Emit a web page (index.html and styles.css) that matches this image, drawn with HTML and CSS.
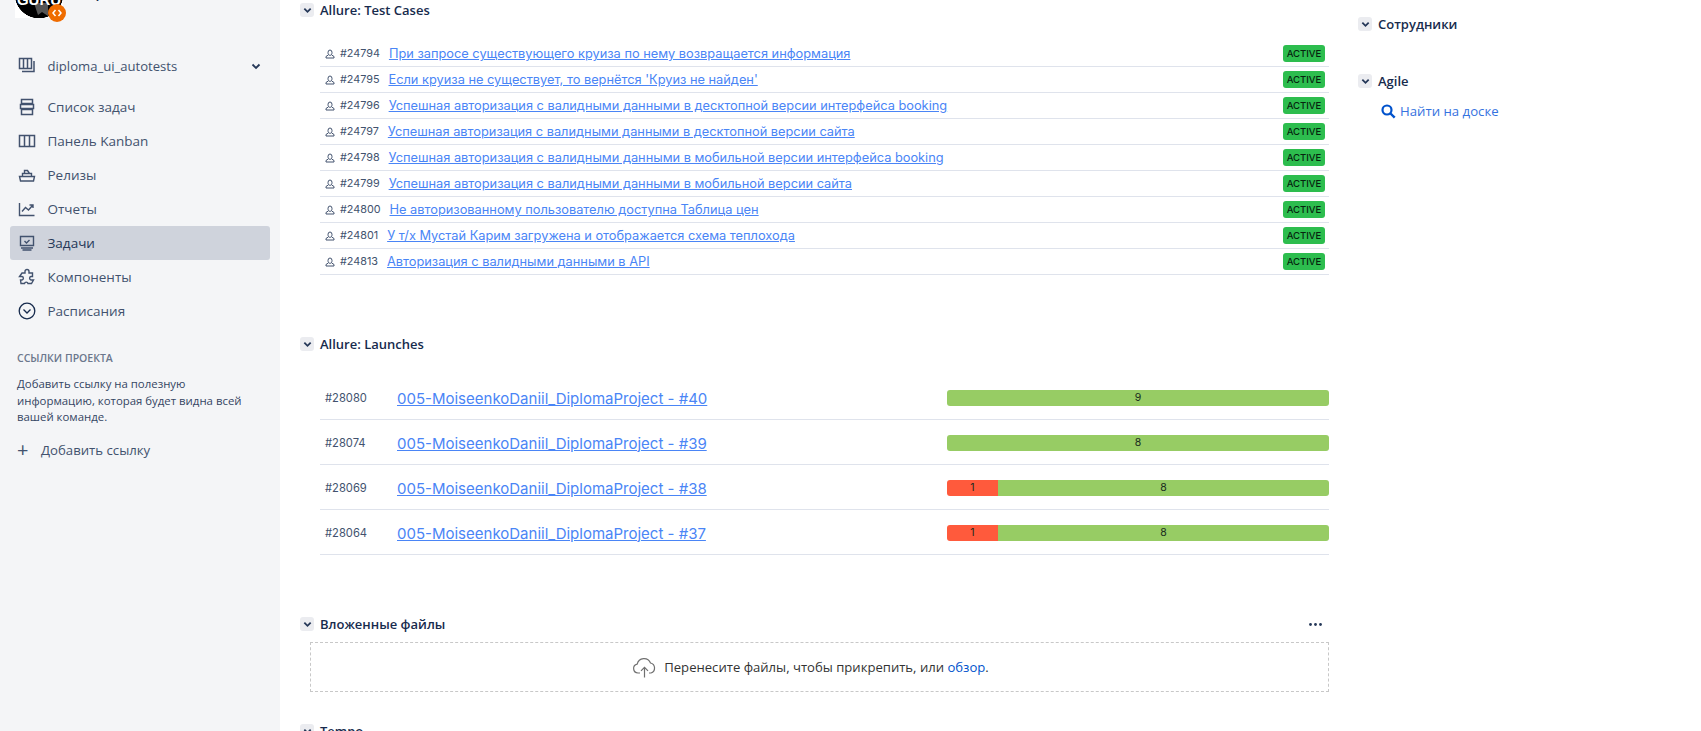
FILE: index.html
```html
<!DOCTYPE html>
<html lang="en">
<head>
    <meta charset="UTF-8">
    <title>diploma_ui_autotests</title>
    <link rel="stylesheet" href="styles.css">
</head>
<body>
    <aside class="sidebar">
        <div class="project-head">
            <div class="logo"><span class="logo-text">GURU</span>
                <svg class="logo-mark" width="14" height="13" viewBox="0 0 14 13"><path d="M0 0h14v13l-6-4-4 3z" fill="#555"/></svg>
                <span class="logo-badge"><svg width="10" height="8" viewBox="0 0 10 8"><path d="M3.500 1 1 4l2.500 3M6.500 1 9 4 6.500 7" fill="none" stroke="#fff" stroke-width="1.500"/></svg></span>
            </div>
            <div class="project-name">diploma_ui_autotests</div>
        </div>

        <div class="nav-item nav-board">
            <svg class="nav-icon" viewBox="0 0 18 18"><path d="M1.500 1.500h12v10h-12zM5.500 1.500v10M9.500 1.500v10M16 4v10.500H4" fill="none" stroke="#42526e" stroke-width="1.500"/></svg>
            <span class="nav-label">diploma_ui_autotests</span>
            <svg class="nav-chevron" viewBox="0 0 10 7"><path d="M1.500 1.500 5 5l3.500-3.500" fill="none" stroke="#253858" stroke-width="1.800"/></svg>
        </div>
        <nav class="nav">
            <a class="nav-item"><svg class="nav-icon" viewBox="0 0 18 18"><path d="M3.500 1.500h11v4h-11zM2.500 6.500h13v4h-13zM3.500 11.500h11v5h-11z" fill="none" stroke="#42526e" stroke-width="1.500"/></svg>Список задач</a>
            <a class="nav-item"><svg class="nav-icon" viewBox="0 0 18 18"><path d="M1.500 3.500h15v11h-15zM6.500 3.500v11M11.500 3.500v11" fill="none" stroke="#42526e" stroke-width="1.500"/></svg>Панель Kanban</a>
            <a class="nav-item"><svg class="nav-icon" viewBox="0 0 18 18"><path d="M1.500 10.500h15l-1 4.500h-13zM4.500 10.500V7.500h9v3M6.500 7.500V4.500h3l2 3" fill="none" stroke="#42526e" stroke-width="1.400"/></svg>Релизы</a>
            <a class="nav-item"><svg class="nav-icon" viewBox="0 0 18 18"><path d="M1.500 3v12.500h15M4 11.500l3.500-4 3 2.500 4-4.500M11.500 5h3.500v3" fill="none" stroke="#42526e" stroke-width="1.400"/></svg>Отчеты</a>
            <a class="nav-item active"><svg class="nav-icon" viewBox="0 0 18 18"><path d="M2.500 2.500h13v9h-13zM3 14h12M4.500 16h9M6.500 7l2 2 3-3" fill="none" stroke="#42526e" stroke-width="1.400"/></svg>Задачи</a>
            <a class="nav-item"><svg class="nav-icon" viewBox="0 0 18 18"><path d="M7 3.500a2 2 0 0 1 4 0V5h3.500v3.500H13a1.800 1.800 0 0 0 0 3.500h2.500l-2 3.500H10a1.800 1.800 0 0 0-3.500 0H3l-.5-3.500H4a1.800 1.800 0 0 0 0-3.500H1.500L4 5h3z" fill="none" stroke="#42526e" stroke-width="1.400"/></svg>Компоненты</a>
            <a class="nav-item"><svg class="nav-icon" viewBox="0 0 18 18"><circle cx="9" cy="9" r="7.800" fill="none" stroke="#172b4d" stroke-width="1.300"/><path d="M5.500 7.500 9 11l3.500-3.500" fill="none" stroke="#172b4d" stroke-width="1.300"/></svg>Расписания</a>
        </nav>

        <div class="links-title">ССЫЛКИ ПРОЕКТА</div>
        <p class="links-text">Добавить ссылку на полезную информацию, которая будет видна всей вашей команде.</p>
        <div class="links-add"><span class="links-plus">+</span>Добавить ссылку</div>
    </aside>

    <main class="content">
        <section class="block block-cases">
            <h3 class="block-title"><span class="toggle"><svg viewBox="0 0 10 7"><path d="M1.500 1.500 5 5l3.500-3.500"/></svg></span>Allure: Test Cases</h3>
            <ul class="cases">
                <li class="case"><svg class="case-icon" viewBox="0 0 10 10"><path d="M3 3.500a2 2.500 0 0 1 4 0c0 2-.8 2.800-2 2.800S3 5.500 3 3.500zM3.300 6 1 7.500V9h8V7.500L6.700 6"/></svg><span class="case-id">#24794</span><a class="case-link">При запросе существующего круиза по нему возвращается информация</a><span class="status">ACTIVE</span></li>
                <li class="case"><svg class="case-icon" viewBox="0 0 10 10"><path d="M3 3.500a2 2.500 0 0 1 4 0c0 2-.8 2.800-2 2.800S3 5.500 3 3.500zM3.300 6 1 7.500V9h8V7.500L6.700 6"/></svg><span class="case-id">#24795</span><a class="case-link">Если круиза не существует, то вернётся 'Круиз не найден'</a><span class="status">ACTIVE</span></li>
                <li class="case"><svg class="case-icon" viewBox="0 0 10 10"><path d="M3 3.500a2 2.500 0 0 1 4 0c0 2-.8 2.800-2 2.800S3 5.500 3 3.500zM3.300 6 1 7.500V9h8V7.500L6.700 6"/></svg><span class="case-id">#24796</span><a class="case-link">Успешная авторизация с валидными данными в десктопной версии интерфейса booking</a><span class="status">ACTIVE</span></li>
                <li class="case"><svg class="case-icon" viewBox="0 0 10 10"><path d="M3 3.500a2 2.500 0 0 1 4 0c0 2-.8 2.800-2 2.800S3 5.500 3 3.500zM3.300 6 1 7.500V9h8V7.500L6.700 6"/></svg><span class="case-id">#24797</span><a class="case-link">Успешная авторизация с валидными данными в десктопной версии сайта</a><span class="status">ACTIVE</span></li>
                <li class="case"><svg class="case-icon" viewBox="0 0 10 10"><path d="M3 3.500a2 2.500 0 0 1 4 0c0 2-.8 2.800-2 2.800S3 5.500 3 3.500zM3.300 6 1 7.500V9h8V7.500L6.700 6"/></svg><span class="case-id">#24798</span><a class="case-link">Успешная авторизация с валидными данными в мобильной версии интерфейса booking</a><span class="status">ACTIVE</span></li>
                <li class="case"><svg class="case-icon" viewBox="0 0 10 10"><path d="M3 3.500a2 2.500 0 0 1 4 0c0 2-.8 2.800-2 2.800S3 5.500 3 3.500zM3.300 6 1 7.500V9h8V7.500L6.700 6"/></svg><span class="case-id">#24799</span><a class="case-link">Успешная авторизация с валидными данными в мобильной версии сайта</a><span class="status">ACTIVE</span></li>
                <li class="case"><svg class="case-icon" viewBox="0 0 10 10"><path d="M3 3.500a2 2.500 0 0 1 4 0c0 2-.8 2.800-2 2.800S3 5.500 3 3.500zM3.300 6 1 7.500V9h8V7.500L6.700 6"/></svg><span class="case-id">#24800</span><a class="case-link">Не авторизованному пользователю доступна Таблица цен</a><span class="status">ACTIVE</span></li>
                <li class="case"><svg class="case-icon" viewBox="0 0 10 10"><path d="M3 3.500a2 2.500 0 0 1 4 0c0 2-.8 2.800-2 2.800S3 5.500 3 3.500zM3.300 6 1 7.500V9h8V7.500L6.700 6"/></svg><span class="case-id">#24801</span><a class="case-link">У т/х Мустай Карим загружена и отображается схема теплохода</a><span class="status">ACTIVE</span></li>
                <li class="case"><svg class="case-icon" viewBox="0 0 10 10"><path d="M3 3.500a2 2.500 0 0 1 4 0c0 2-.8 2.800-2 2.800S3 5.500 3 3.500zM3.300 6 1 7.500V9h8V7.500L6.700 6"/></svg><span class="case-id">#24813</span><a class="case-link">Авторизация с валидными данными в API</a><span class="status">ACTIVE</span></li>
            </ul>
        </section>

        <section class="block block-launches">
            <h3 class="block-title"><span class="toggle"><svg viewBox="0 0 10 7"><path d="M1.500 1.500 5 5l3.500-3.500"/></svg></span>Allure: Launches</h3>
            <ul class="launches">
                <li class="launch"><span class="launch-id">#28080</span><a class="launch-link">005-MoiseenkoDaniil_DiplomaProject - #40</a><div class="bar"><span class="bar-pass">9</span></div></li>
                <li class="launch"><span class="launch-id">#28074</span><a class="launch-link">005-MoiseenkoDaniil_DiplomaProject - #39</a><div class="bar"><span class="bar-pass">8</span></div></li>
                <li class="launch"><span class="launch-id">#28069</span><a class="launch-link">005-MoiseenkoDaniil_DiplomaProject - #38</a><div class="bar"><span class="bar-fail">1</span><span class="bar-pass">8</span></div></li>
                <li class="launch"><span class="launch-id">#28064</span><a class="launch-link">005-MoiseenkoDaniil_DiplomaProject - #37</a><div class="bar"><span class="bar-fail">1</span><span class="bar-pass">8</span></div></li>
            </ul>
        </section>

        <section class="block block-files">
            <h3 class="block-title"><span class="toggle"><svg viewBox="0 0 10 7"><path d="M1.500 1.500 5 5l3.500-3.500"/></svg></span>Вложенные файлы<svg class="more" width="14" height="3" viewBox="0 0 14 3"><circle cx="1.500" cy="1.500" r="1.400"/><circle cx="6.500" cy="1.500" r="1.400"/><circle cx="11.500" cy="1.500" r="1.400"/></svg></h3>
            <div class="dropzone">
                <svg class="cloud" width="25" height="21" viewBox="0 0 25 21"><path d="M8 16H6a4.500 4.500 0 0 1-.8-8.900A7 7 0 0 1 18.500 6a5.200 5.200 0 0 1 .5 10h-2M12.500 20.500V10.500M9 13.800l3.500-3.500 3.500 3.500" fill="none" stroke="#707070" stroke-width="1.200"/></svg>
                <span>Перенесите файлы, чтобы прикрепить, или <a class="browse">обзор</a>.</span>
            </div>
        </section>

        <section class="block block-tempo">
            <h3 class="block-title"><span class="toggle"><svg viewBox="0 0 10 7"><path d="M1.500 1.500 5 5l3.500-3.500"/></svg></span>Tempo</h3>
        </section>
    </main>

    <aside class="side">
        <section class="side-block">
            <h3 class="block-title"><span class="toggle"><svg viewBox="0 0 10 7"><path d="M1.500 1.500 5 5l3.500-3.500"/></svg></span>Сотрудники</h3>
        </section>
        <section class="side-block">
            <h3 class="block-title"><span class="toggle"><svg viewBox="0 0 10 7"><path d="M1.500 1.500 5 5l3.500-3.500"/></svg></span>Agile</h3>
            <a class="find"><svg width="15" height="15" viewBox="0 0 15 15"><circle cx="6" cy="6" r="4.500" fill="none" stroke="#0052cc" stroke-width="2.200"/><path d="m9.500 9.500 4.200 4.200" stroke="#0052cc" stroke-width="2.400"/></svg>Найти на доске</a>
        </section>
    </aside>
</body>
</html>
```

FILE: styles.css
```css
* {
    box-sizing: border-box;
}
html, body {
    height: 731px;
    overflow: hidden;
}
body {
    margin: 0;
    display: flex;
    font-family: 'Open Sans', 'Noto Sans', sans-serif;
    font-size: 14px;
    color: #172b4d;
    background: white;
}
h3, p, ul {
    margin: 0;
    padding: 0;
}
ul {
    list-style: none;
}

/* left column */
.sidebar {
    width: 280px;
    flex: none;
    height: 731px;
    padding: 0 10px;
    background: #f4f5f7;
}
.project-head {
    height: 49px;
    display: flex;
    padding-left: 5px;
}
.logo {
    position: relative;
    width: 48px;
    height: 18px;
    background: radial-gradient(circle at 24px -6px, #000 24px, #fff 24.500px);
    text-align: center;
}
.logo-text {
    display: block;
    position: relative;
    z-index: 1;
    margin-top: -9px;
    font-family: 'Liberation Sans', sans-serif;
    font-size: 15px;
    font-weight: bold;
    color: white;
}
.logo-mark {
    position: absolute;
    left: 19px;
    top: 3px;
}
.logo-badge {
    position: absolute;
    z-index: 2;
    left: 33px;
    top: 4px;
    width: 18px;
    height: 18px;
    display: flex;
    align-items: center;
    justify-content: center;
    border-radius: 50%;
    background: #ef6c00;
}
.project-name {
    margin: -17px 0 0 20px;
    font-weight: 600;
}
.nav-item {
    height: 34px;
    display: flex;
    align-items: center;
    padding: 0 7px 0 8px;
    border-radius: 3px;
    color: #42526e;
    font-size: 13.500px;
}
.nav-board {
    margin-bottom: 7px;
}
.nav-label {
    flex: 1;
    font-size: 13.100px;
}
.nav-icon {
    width: 18px;
    height: 18px;
    margin-right: 11.500px;
    flex: none;
}
.nav-chevron {
    width: 10px;
    height: 7px;
    margin-right: 2px;
}
.nav-item.active {
    background: #cfd3dc;
    color: #253858;
    font-weight: 500;
}
.links-title {
    margin: 22px 0 0 7px;
    font-size: 10.500px;
    font-weight: 600;
    line-height: 16px;
    color: #6b778c;
}
.links-text {
    margin: 10px 0 0 7px;
    width: 240px;
    font-size: 11.400px;
    line-height: 16.500px;
    color: #344563;
}
.links-add {
    margin: 15px 0 0 7px;
    display: flex;
    align-items: center;
    font-size: 13.200px;
    color: #42526e;
}
.links-plus {
    width: 24px;
    font-size: 20px;
    line-height: 18px;
}

/* middle column */
.content {
    width: 1029px;
    margin-left: 20px;
    flex: none;
}
.block-title {
    display: flex;
    align-items: center;
    height: 20px;
    font-size: 13px;
    font-weight: 600;
    color: #172b4d;
}
.toggle {
    width: 14px;
    height: 14px;
    margin-right: 6px;
    display: flex;
    align-items: center;
    justify-content: center;
    flex: none;
    border-radius: 3px;
    background: #ebecf0;
}
.toggle svg {
    width: 9px;
    height: 7px;
    fill: none;
    stroke: #253858;
    stroke-width: 2;
}
.cases {
    margin: 21px 0 0 20px;
}
.case {
    height: 26px;
    display: flex;
    align-items: center;
    padding: 0 4px;
    border-bottom: 1px solid #dfe3ec;
    font-family: Inter, sans-serif;
    font-size: 12.800px;
}
.case-icon {
    width: 10px;
    height: 10px;
    margin: 0 5px 0 1px;
    flex: none;
    fill: none;
    stroke: #42526e;
    stroke-width: 1;
}
.case-id {
    margin-right: 9px;
    font-size: 10.800px;
    color: #42526e;
}
.case-link, .launch-link {
    color: #4a85f6;
    text-decoration: underline;
}
.status {
    margin-left: auto;
    width: 42px;
    height: 17px;
    display: flex;
    align-items: center;
    justify-content: center;
    border-radius: 3px;
    background: #2dbd4e;
    color: #06240e;
    font-size: 9.500px;
    font-weight: 500;
}
.block-launches {
    margin-top: 59px;
}
.launches {
    margin: 21px 0 0 20px;
}
.launch {
    height: 45px;
    display: flex;
    align-items: center;
    padding: 2px 0 0 5px;
    border-bottom: 1px solid #dfe3ec;
    font-family: Inter, sans-serif;
}
.launch-id {
    width: 72px;
    font-size: 11.200px;
    color: #42526e;
}
.launch-link {
    font-size: 15px;
}
.bar {
    margin-left: auto;
    width: 382px;
    height: 16px;
    display: flex;
    border-radius: 3px;
    overflow: hidden;
    font-size: 10.500px;
    line-height: 16px;
    text-align: center;
    color: #172b1d;
}
.bar-pass {
    flex: 1;
    background: #97cc64;
}
.bar-fail {
    width: 51px;
    background: #ff5a3c;
}
.block-files {
    margin-top: 59px;
}
.more {
    margin-left: auto;
    margin-right: 6px;
    fill: #253858;
}
.dropzone {
    margin: 8px 0 0 10px;
    height: 50px;
    display: flex;
    align-items: center;
    justify-content: center;
    gap: 7px;
    padding-right: 18px;
    border: 1px dashed #c8c8c8;
    font-size: 13.100px;
    color: #333;
}
.browse {
    color: #0052cc;
}
.block-tempo {
    margin-top: 29px;
}

/* right column */
.side {
    margin-left: 29px;
    padding-top: 14px;
    width: 300px;
}
.side-block {
    margin-bottom: 37px;
}
.find {
    margin: 11px 0 0 23px;
    display: flex;
    align-items: center;
    gap: 4px;
    font-size: 13.200px;
    color: #3572e0;
}
```
